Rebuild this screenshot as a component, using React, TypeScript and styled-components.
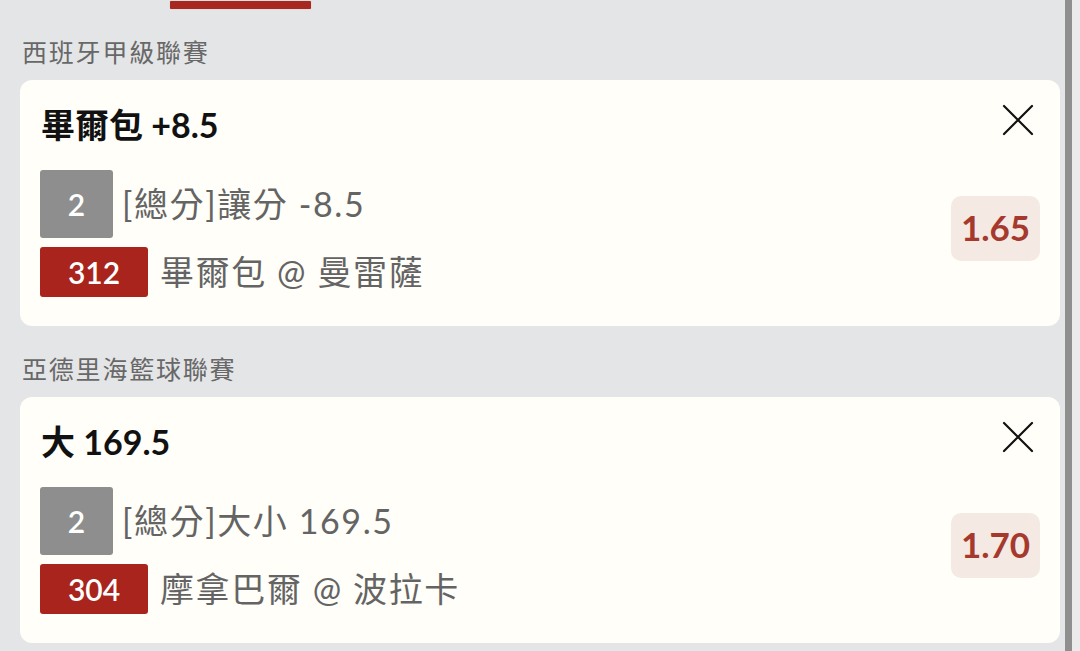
import React from "react";
import styled, { createGlobalStyle } from "styled-components";

const Global = createGlobalStyle`
  html, body { margin: 0; padding: 0; background: #e4e5e7; }
  body { font-family: Lato, "Noto Sans CJK TC", sans-serif; overflow: hidden; }
  * { box-sizing: border-box; }
`;

const Page = styled.div`
  display: flex;
  width: 1080px;
  height: 651px;
  background: #e4e5e7;
  overflow: hidden;
`;

const Main = styled.div`
  flex: 1;
  display: flex;
  flex-direction: column;
  padding: 0 5px 0 20px;
`;

const EdgeDark = styled.div`
  width: 7px;
  background: #8f8f8f;
`;

const EdgeLight = styled.div`
  width: 8px;
  background: #ebebec;
`;

const TabBar = styled.div`
  height: 9px;
  display: flex;
  padding-left: 150px;
`;

const TabIndicator = styled.div`
  width: 141px;
  height: 8px;
  margin-top: 1px;
  background: #a8271f;
  border-radius: 1px;
  box-shadow: 0 0 1px rgba(230, 110, 100, 0.6);
`;

const LeagueHeader = styled.div`
  height: 71px;
  padding: 26px 0 0 2px;
  font-family: "Noto Sans CJK TC", sans-serif;
  font-size: 25px;
  letter-spacing: 1.8px;
  line-height: 32px;
  color: #686868;
`;

const Card = styled.div`
  background: #fffef8;
  border-radius: 12px;
  height: 246px;
  padding: 25px 20px 29px 20px;
  display: grid;
  grid-template-columns: 1fr auto;
  grid-template-rows: 40px auto;
  row-gap: 25px;
`;

const Title = styled.div`
  font-size: 34px;
  font-weight: 700;
  line-height: 40px;
  color: #111;
  padding-left: 1px;
  white-space: nowrap;
`;

const CloseButton = styled.button`
  justify-self: end;
  width: 44px;
  height: 44px;
  margin: -7px 0 0 0;
  padding: 0;
  border: none;
  background: transparent;
  display: flex;
  align-items: center;
  justify-content: center;
  cursor: pointer;
`;

const Lines = styled.div`
  display: flex;
  flex-direction: column;
  gap: 9px;
`;

const Line = styled.div<{ $gap: number }>`
  display: flex;
  align-items: center;
  gap: ${(p) => p.$gap}px;
`;

const Tag = styled.div<{ $tone: "gray" | "red" }>`
  width: ${(p) => (p.$tone === "gray" ? 73 : 108)}px;
  height: ${(p) => (p.$tone === "gray" ? 68 : 50)}px;
  border-radius: 3px;
  background: ${(p) => (p.$tone === "gray" ? "#8e8e8e" : "#a8241c")};
  color: #fff;
  font-size: 30px;
  font-weight: 600;
  display: flex;
  align-items: center;
  justify-content: center;
`;

const LineText = styled.div`
  font-size: 34px;
  color: #646464;
  letter-spacing: 1.6px;
  line-height: 42px;
  white-space: nowrap;
`;

const Odds = styled.div`
  align-self: start;
  margin-top: 26px;
  width: 89px;
  height: 65px;
  border-radius: 10px;
  background: #f4e9e3;
  color: #a6392d;
  font-size: 35px;
  font-weight: 700;
  line-height: 1;
  padding-bottom: 3px;
  display: flex;
  align-items: center;
  justify-content: center;
`;

const CloseIcon = () => (
  <svg width="32" height="32" viewBox="0 0 32 32" fill="none">
    <path d="M2 2 L30 30 M30 2 L2 30" stroke="#111" strokeWidth="2.2" strokeLinecap="round" />
  </svg>
);

type Bet = {
  league: string;
  title: string;
  num: string;
  market: string;
  code: string;
  match: string;
  odds: string;
};

const bets: Bet[] = [
  {
    league: "西班牙甲級聯賽",
    title: "畢爾包 +8.5",
    num: "2",
    market: "[總分]讓分 -8.5",
    code: "312",
    match: "畢爾包 @ 曼雷薩",
    odds: "1.65",
  },
  {
    league: "亞德里海籃球聯賽",
    title: "大 169.5",
    num: "2",
    market: "[總分]大小 169.5",
    code: "304",
    match: "摩拿巴爾 @ 波拉卡",
    odds: "1.70",
  },
];

export default function App() {
  return (
    <Page>
      <Global />
      <Main>
        <TabBar>
          <TabIndicator />
        </TabBar>
        {bets.map((b) => (
          <React.Fragment key={b.code}>
            <LeagueHeader>{b.league}</LeagueHeader>
            <Card>
              <Title>{b.title}</Title>
              <CloseButton aria-label="close">
                <CloseIcon />
              </CloseButton>
              <Lines>
                <Line $gap={9}>
                  <Tag $tone="gray">{b.num}</Tag>
                  <LineText>{b.market}</LineText>
                </Line>
                <Line $gap={12}>
                  <Tag $tone="red">{b.code}</Tag>
                  <LineText>{b.match}</LineText>
                </Line>
              </Lines>
              <Odds>{b.odds}</Odds>
            </Card>
          </React.Fragment>
        ))}
      </Main>
      <EdgeDark />
      <EdgeLight />
    </Page>
  );
}
